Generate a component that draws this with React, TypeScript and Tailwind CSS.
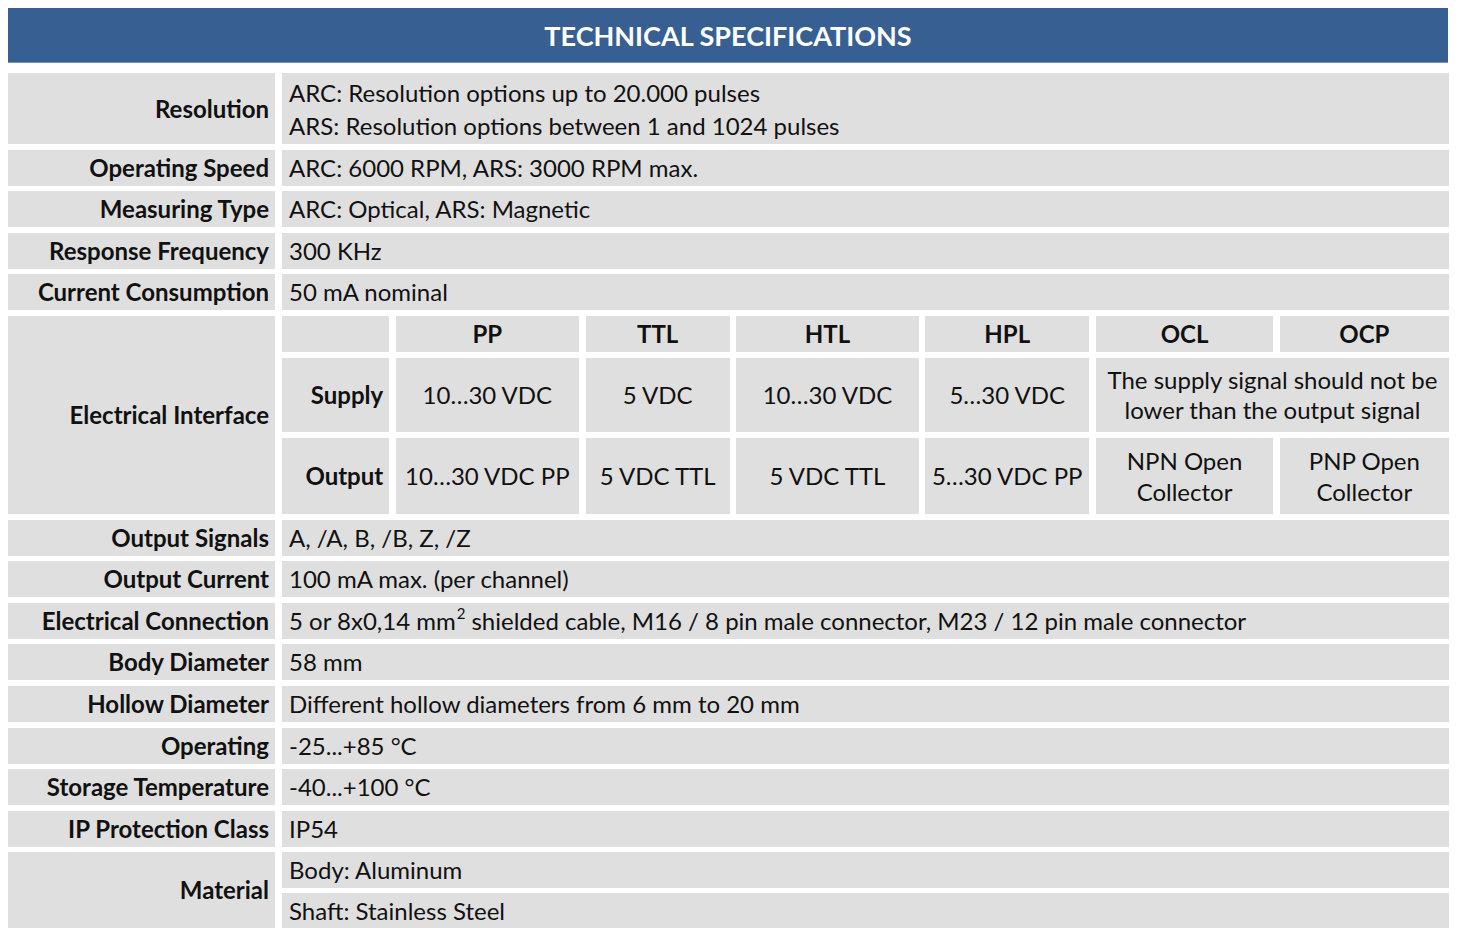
const font = { fontFamily: "Lato, 'Open Sans', sans-serif" };

type Spec = { label: string; lines: React.ReactNode[] };

const topRows: Spec[] = [
  { label: "Operating Speed", lines: ["ARC: 6000 RPM, ARS: 3000 RPM max."] },
  { label: "Measuring Type", lines: ["ARC: Optical, ARS: Magnetic"] },
  { label: "Response Frequency", lines: ["300 KHz"] },
  { label: "Current Consumption", lines: ["50 mA nominal"] },
];

const bottomRows: Spec[] = [
  { label: "Output Signals", lines: ["A, /A, B, /B, Z, /Z"] },
  { label: "Output Current", lines: ["100 mA max. (per channel)"] },
  {
    label: "Electrical Connection",
    lines: [
      <>
        5 or 8x0,14 mm<sup className="text-[15px] relative -top-[8px] ml-[1px] mr-[6px]">2</sup>shielded cable, M16 / 8 pin male connector, M23 / 12 pin male connector
      </>,
    ],
  },
  { label: "Body Diameter", lines: ["58 mm"] },
  { label: "Hollow Diameter", lines: ["Different hollow diameters from 6 mm to 20 mm"] },
  { label: "Operating", lines: ["-25...+85 °C"] },
  { label: "Storage Temperature", lines: ["-40...+100 °C"] },
  { label: "IP Protection Class", lines: ["IP54"] },
];

const types = ["PP", "TTL", "HTL", "HPL", "OCL", "OCP"];
const supply = ["10…30 VDC", "5 VDC", "10…30 VDC", "5…30 VDC"];
const output: React.ReactNode[] = [
  "10…30 VDC PP",
  "5 VDC TTL",
  "5 VDC TTL",
  "5…30 VDC PP",
  <>NPN Open<br />Collector</>,
  <>PNP Open<br />Collector</>,
];

const Label = ({ children }: { children: React.ReactNode }) => (
  <div className="bg-[#dfdfdf] flex items-center justify-end pr-[6px] font-bold">{children}</div>
);

const Row = ({ spec }: { spec: Spec }) => (
  <div className="grid grid-cols-[267px_1fr] gap-x-[7px] h-[36px]">
    <Label>{spec.label}</Label>
    <div className="bg-[#dfdfdf] flex items-center pl-[7px] whitespace-nowrap">{spec.lines[0]}</div>
  </div>
);

export default function App() {
  return (
    <div className="bg-white w-[1458px] h-[934px] pt-[8px] pl-[8px] text-[24px] text-[#111] leading-none" style={font}>
      <div className="w-[1440px] h-[55px] bg-[#375f91] border-b border-[#6f8fbf] flex items-center justify-center text-white font-bold text-[27px]">
        TECHNICAL SPECIFICATIONS
      </div>

      <div className="mt-[10px] w-[1441px] flex flex-col gap-y-[5.6px]">
        <div className="grid grid-cols-[267px_1fr] gap-x-[7px] h-[71px]">
          <Label>Resolution</Label>
          <div className="bg-[#dfdfdf] flex flex-col justify-center pl-[7px] leading-[33px]">
            <span>ARC: Resolution options up to 20.000 pulses</span>
            <span>ARS: Resolution options between 1 and 1024 pulses</span>
          </div>
        </div>

        {topRows.map((r) => (
          <Row key={r.label} spec={r} />
        ))}

        <div className="grid grid-cols-[267px_1fr] gap-x-[7px] h-[198px]">
          <Label>Electrical Interface</Label>
          <div className="grid grid-cols-[107fr_183fr_144fr_182fr_164fr_177fr_169fr] grid-rows-[36px_74px_76px] gap-x-[6.5px] gap-y-[6px]">
            <div className="bg-[#dfdfdf]" />
            {types.map((t) => (
              <div key={t} className="bg-[#dfdfdf] flex items-center justify-center font-bold">
                {t}
              </div>
            ))}

            <div className="bg-[#dfdfdf] flex items-center justify-end pr-[6px] font-bold">Supply</div>
            {supply.map((s, i) => (
              <div key={i} className="bg-[#dfdfdf] flex items-center justify-center whitespace-nowrap">
                {s}
              </div>
            ))}
            <div className="col-span-2 bg-[#dfdfdf] flex items-center justify-center text-center leading-[30px] whitespace-nowrap">
              The supply signal should not be
              <br />
              lower than the output signal
            </div>

            <div className="bg-[#dfdfdf] flex items-center justify-end pr-[6px] font-bold">Output</div>
            {output.map((o, i) => (
              <div key={i} className="bg-[#dfdfdf] flex items-center justify-center text-center leading-[31px] whitespace-nowrap">
                <span>{o}</span>
              </div>
            ))}
          </div>
        </div>

        {bottomRows.map((r) => (
          <Row key={r.label} spec={r} />
        ))}

        <div className="grid grid-cols-[267px_1fr] gap-x-[7px] h-[76px]">
          <Label>Material</Label>
          <div className="grid grid-rows-2 gap-y-[5px]">
            <div className="bg-[#dfdfdf] flex items-center pl-[7px]">Body: Aluminum</div>
            <div className="bg-[#dfdfdf] flex items-center pl-[7px]">Shaft: Stainless Steel</div>
          </div>
        </div>
      </div>
    </div>
  );
}
